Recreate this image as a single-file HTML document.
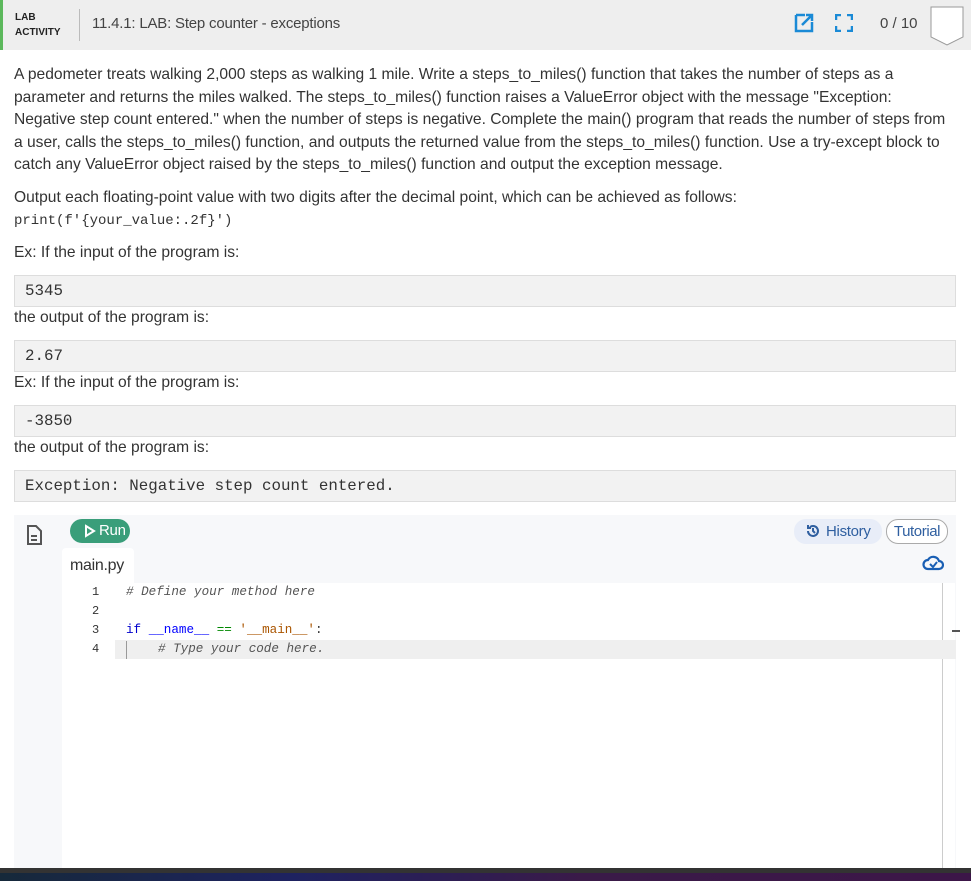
<!DOCTYPE html>
<html><head><meta charset="utf-8"><style>
*{margin:0;padding:0;box-sizing:border-box}
body{width:971px;height:881px;overflow:hidden;background:#fff;font-family:"Liberation Sans",sans-serif;color:#333;position:relative}
.hdr{position:absolute;left:0;top:0;width:971px;height:50px;background:#eeeeee;border-left:3px solid #5cb85c}
.lab{position:absolute;left:15px;top:10px;font-size:10px;font-weight:bold;color:#222;line-height:15px}
.sep{position:absolute;left:79px;top:9px;width:1px;height:32px;background:#bbb}
.ttl{position:absolute;left:92px;top:15px;font-size:15px;color:#444;letter-spacing:-0.2px}
.score{position:absolute;left:880px;top:15px;font-size:15px;color:#444}
.p{position:absolute;left:14px;font-size:15.6px;line-height:22.5px;color:#333;white-space:nowrap}
.mono{font-family:"Liberation Mono",monospace;font-size:14px;letter-spacing:0}
.pre{position:absolute;left:14px;width:942px;height:32px;background:#f2f2f2;border:1px solid #ddd;font-family:"Liberation Mono",monospace;font-size:15.8px;padding:6px 10px;color:#333}
.panel{position:absolute;left:14px;top:515px;width:942px;height:353px;background:#f7f8fa}
.code{position:absolute;left:62px;top:583px;width:893px;height:285px;background:#fff}
.ln{position:absolute;left:92px;font-family:"Liberation Mono",monospace;font-size:12px;color:#333}
.cl{position:absolute;left:126px;font-family:"Liberation Mono",monospace;font-size:12.6px}
</style></head><body>
<div class="hdr"></div>
<div class="lab">LAB<br>ACTIVITY</div>
<div class="sep"></div>
<div class="ttl">11.4.1: LAB: Step counter - exceptions</div>
<svg style="position:absolute;left:793px;top:12px" width="22" height="22" viewBox="0 0 22 22"><path d="M3 3h9M3 3v16h16v-9" stroke="#1a8ad6" stroke-width="2.5" fill="none"/><path d="M9 13L19 3M13 3h6v6" stroke="#1a8ad6" stroke-width="2.5" fill="none"/></svg>
<svg style="position:absolute;left:835px;top:14px" width="18" height="18" viewBox="0 0 18 18"><path d="M1 6V1h5M12 1h5v5M17 12v5h-5M6 17H1v-5" stroke="#1a8ad6" stroke-width="2.5" fill="none"/></svg>
<div class="score">0 / 10</div>
<svg style="position:absolute;left:930px;top:6px" width="34" height="40" viewBox="0 0 34 40"><path d="M1 1h32v30l-16 8l-16-8z" fill="#fff" stroke="#999"/></svg>

<div class="p" style="top:64px">A pedometer treats walking 2,000 steps as walking 1 mile. Write a steps_to_miles() function that takes the number of steps as a<br>parameter and returns the miles walked. The steps_to_miles() function raises a ValueError object with the message "Exception:<br>Negative step count entered." when the number of steps is negative. Complete the main() program that reads the number of steps from<br>a user, calls the steps_to_miles() function, and outputs the returned value from the steps_to_miles() function. Use a try-except block to<br>catch any ValueError object raised by the steps_to_miles() function and output the exception message.</div>
<div class="p" style="top:187px">Output each floating-point value with two digits after the decimal point, which can be achieved as follows:</div>
<div class="p mono" style="top:210px">print(f'{your_value:.2f}')</div>
<div class="p" style="top:242px">Ex: If the input of the program is:</div>
<div class="pre" style="top:275px">5345</div>
<div class="p" style="top:307px">the output of the program is:</div>
<div class="pre" style="top:340px">2.67</div>
<div class="p" style="top:372px">Ex: If the input of the program is:</div>
<div class="pre" style="top:405px">-3850</div>
<div class="p" style="top:437px">the output of the program is:</div>
<div class="pre" style="top:470px">Exception: Negative step count entered.</div>

<div class="panel"></div>
<svg style="position:absolute;left:26px;top:525px" width="16" height="20" viewBox="0 0 16 20"><path d="M2 1h8l5 5v13H2z" fill="none" stroke="#555" stroke-width="2"/><path d="M5 11h6M5 15h6" stroke="#555" stroke-width="2"/></svg>
<div style="position:absolute;left:70px;top:519px;width:60px;height:24px;background:#3a9e7a;border-radius:12px;color:#fff;font-size:15px;line-height:24px;padding-left:29px;letter-spacing:-0.3px">Run</div>
<svg style="position:absolute;left:84px;top:524px" width="12" height="14" viewBox="0 0 12 14"><path d="M2 2l8 5l-8 5z" fill="none" stroke="#fff" stroke-width="2"/></svg>
<div style="position:absolute;left:794px;top:519px;width:88px;height:25px;background:#e8edf8;border-radius:12px;color:#2f5fa0;font-size:15px;line-height:25px;padding-left:32px;letter-spacing:-0.3px">History</div>
<svg style="position:absolute;left:805px;top:523px" width="16" height="16" viewBox="0 0 16 16"><path d="M3 8a5 5 0 1 0 2-4M3 2v3h3M8 5v3l2 2" fill="none" stroke="#2f5fa0" stroke-width="2"/></svg>
<div style="position:absolute;left:886px;top:519px;width:62px;height:25px;background:#fff;border:1px solid #aaa;border-radius:12px;color:#2f5fa0;font-size:15px;line-height:23px;text-align:center;letter-spacing:-0.4px">Tutorial</div>
<div style="position:absolute;left:62px;top:548px;width:72px;height:36px;background:#fff;border-radius:4px 4px 0 0;font-size:16px;color:#333;padding:9px 0 0 8px;letter-spacing:-0.3px">main.py</div>
<svg style="position:absolute;left:922px;top:552px" width="22" height="20" viewBox="0 0 22 20"><path d="M6 17h11a4 4 0 0 0 0-8a6 6 0 0 0-11-1a4.5 4.5 0 0 0 0 9z" fill="none" stroke="#1a5fb4" stroke-width="2.2"/><path d="M8 12l3 3l4-5" fill="none" stroke="#1a5fb4" stroke-width="2"/></svg>
<div class="code"></div>
<div style="position:absolute;left:942px;top:583px;width:1px;height:285px;background:#ccc"></div>
<div style="position:absolute;left:952px;top:630px;width:8px;height:2px;background:#555"></div>
<div style="position:absolute;left:115px;top:640px;width:841px;height:19px;background:#efefef"></div>
<div style="position:absolute;left:126px;top:641px;width:1px;height:18px;background:#999"></div>
<div class="ln" style="top:585px">1</div>
<div class="ln" style="top:604px">2</div>
<div class="ln" style="top:623px">3</div>
<div class="ln" style="top:642px">4</div>
<div class="cl" style="top:585px;color:#555;font-style:italic"># Define your method here</div>
<div class="cl" style="top:623px"><span style="color:#00c">if</span> <span style="color:#00f">__name__</span> <span style="color:#080">==</span> <span style="color:#a50">'__main__'</span>:</div>
<div class="cl" style="top:642px;left:158px;color:#555;font-style:italic"># Type your code here.</div>
<div style="position:absolute;left:0;top:868px;width:971px;height:5px;background:#333"></div>
<div style="position:absolute;left:0;top:873px;width:971px;height:8px;background:linear-gradient(90deg,#16293a,#1e2260 30%,#3a1a48 60%,#3c1648)"></div>
</body></html>
